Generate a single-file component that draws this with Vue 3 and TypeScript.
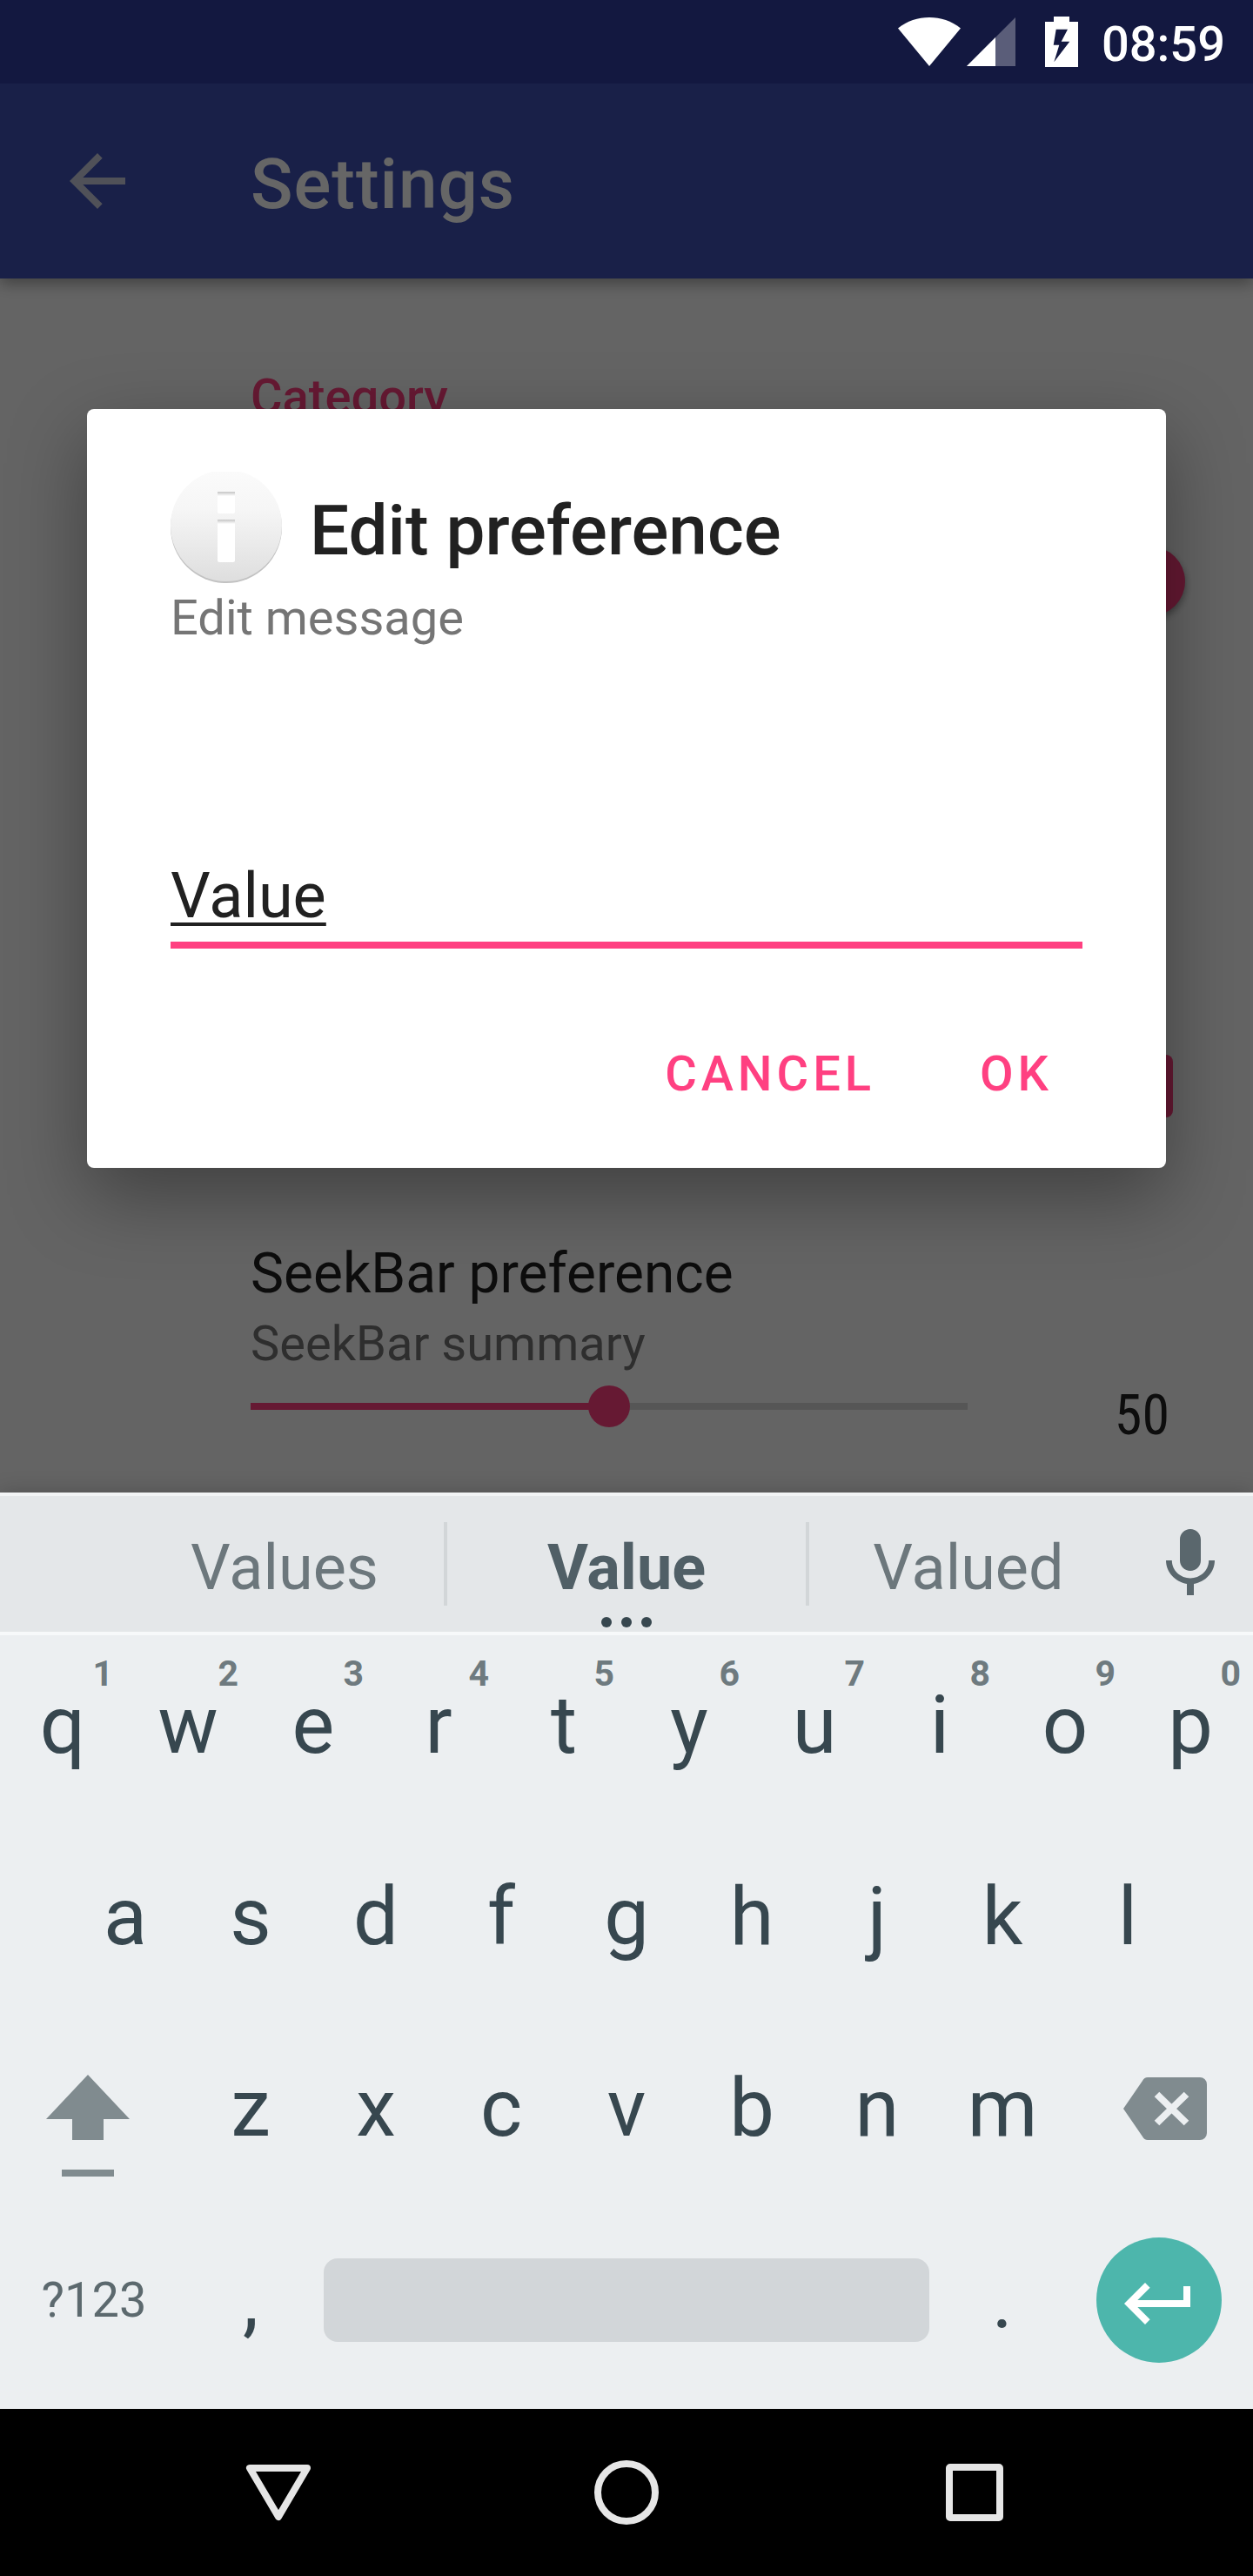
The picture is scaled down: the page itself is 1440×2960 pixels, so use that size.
<script setup lang="ts">
import { ref } from 'vue'

interface Key {
  label: string
  hint?: string
}

const value = ref('Value')
const seek = ref(50)
const switchOn = ref(true)
const checked = ref(true)

const topRow: Key[] = [...'qwertyuiop'].map((label, i) => ({ label, hint: String((i + 1) % 10) }))
const middleRow: Key[] = [...'asdfghjkl'].map((label) => ({ label }))
const bottomRow: Key[] = [...'zxcvbnm'].map((label) => ({ label }))
</script>

<template>
  <div class="screen">
    <header class="status">
      <svg class="wifi" viewBox="0 0 72 56" aria-hidden="true">
        <path d="M0 12.500C10.500 4 23 0 36 0s25.500 4 36 12.500L36 56z" fill="#fff" />
      </svg>
      <svg class="signal" viewBox="0 0 56 56" aria-hidden="true">
        <path d="M0 56 56 0v56z" fill="#fff" fill-opacity=".3" />
        <path d="M0 56 33 23v33z" fill="#fff" />
      </svg>
      <svg class="battery" viewBox="0 0 38 58" aria-hidden="true">
        <path
          d="M10 0h18v6h10v52H0V6h10zM12.700 14.700 9.700 32.700h6.600L10.300 52.300 28.300 28.700h-9.600L26 14.700z"
          fill="#fff"
          fill-rule="evenodd"
        />
      </svg>
      <time class="clock">08:59</time>
    </header>

    <div class="app">
      <div class="toolbar">
        <button class="back" type="button" aria-label="Navigate up">
          <svg viewBox="0 0 24 24"><path d="M20 11H7.830l5.590-5.590L12 4l-8 8 8 8 1.410-1.410L7.830 13H20z" fill="currentColor" /></svg>
        </button>
        <h1>Settings</h1>
      </div>

      <main class="list">
        <h2 class="category">Category</h2>
        <div class="row">
          <input v-model="switchOn" class="switch" type="checkbox" role="switch" aria-label="Switch preference" />
        </div>
        <div class="row-gap"></div>
        <div class="row">
          <input v-model="checked" class="check" type="checkbox" aria-label="Checkbox preference" />
        </div>
        <div class="seek">
          <div class="seek-main">
            <label class="seek-title" for="seek">SeekBar preference</label>
            <p class="seek-summary">SeekBar summary</p>
            <input id="seek" v-model.number="seek" type="range" min="0" max="100" :style="{ '--fill': seek + '%' }" />
          </div>
          <output class="seek-value" for="seek">{{ seek }}</output>
        </div>
      </main>

      <div class="scrim">
        <section class="dialog" role="dialog" aria-labelledby="dialog-title">
          <div class="dialog-head">
            <svg class="info" viewBox="0 0 128 128" aria-hidden="true">
              <defs>
                <linearGradient id="disc" x1="0" y1="0" x2="0" y2="1">
                  <stop offset="0" stop-color="#fbfbfb" />
                  <stop offset=".35" stop-color="#f6f6f6" />
                  <stop offset="1" stop-color="#dedede" />
                </linearGradient>
                <linearGradient id="bar" x1="0" y1="0" x2="0" y2="1">
                  <stop offset="0" stop-color="#c4c4c4" />
                  <stop offset="1" stop-color="#fff" />
                </linearGradient>
              </defs>
              <circle cx="64" cy="64" r="64" fill="#c2c2c2" />
              <circle cx="64" cy="62" r="64" fill="url(#disc)" />
              <rect x="54" y="24" width="20" height="24" rx="2" fill="#fff" />
              <rect x="54" y="56" width="20" height="48" rx="2" fill="#fff" />
              <rect x="54" y="23" width="20" height="5" fill="url(#bar)" />
              <rect x="54" y="55" width="20" height="5" fill="url(#bar)" />
            </svg>
            <h2 id="dialog-title">Edit preference</h2>
          </div>
          <label class="message" for="pref-value">Edit message</label>
          <input id="pref-value" v-model="value" class="field" type="text" spellcheck="false" />
          <div class="actions">
            <button type="button">CANCEL</button>
            <button type="button">OK</button>
          </div>
        </section>
      </div>
    </div>

    <section class="keyboard" aria-label="Keyboard">
      <div class="strip">
        <button class="word" type="button">Values</button>
        <i class="rule"></i>
        <button class="word main-word" type="button">
          Value
          <svg class="dots" viewBox="0 0 58 12" aria-hidden="true">
            <circle cx="6" cy="6" r="6" /><circle cx="29" cy="6" r="6" /><circle cx="52" cy="6" r="6" />
          </svg>
        </button>
        <i class="rule"></i>
        <button class="word" type="button">Valued</button>
        <button class="mic" type="button" aria-label="Voice input">
          <svg viewBox="0 0 24 24">
            <path d="M12 14c1.660 0 3-1.340 3-3V5c0-1.660-1.340-3-3-3S9 3.340 9 5v6c0 1.660 1.340 3 3 3zm5.300-3c0 3-2.540 5.100-5.300 5.100S6.700 14 6.700 11H5c0 3.410 2.720 6.230 6 6.720V21h2v-3.280c3.280-.480 6-3.300 6-6.720z" fill="currentColor" />
          </svg>
        </button>
      </div>

      <div class="keys">
        <div class="krow">
          <button v-for="k in topRow" :key="k.label" class="key" type="button">
            {{ k.label }}<span class="hint">{{ k.hint }}</span>
          </button>
        </div>
        <div class="krow inset">
          <button v-for="k in middleRow" :key="k.label" class="key" type="button">{{ k.label }}</button>
        </div>
        <div class="krow">
          <button class="key wide shift" type="button" aria-label="Shift">
            <svg viewBox="0 0 96 118">
              <path d="M48 0 96 51H66v24H30V51H0z" fill="currentColor" />
              <path d="M18 109h60v8H18z" fill="currentColor" />
            </svg>
          </button>
          <button v-for="k in bottomRow" :key="k.label" class="key" type="button">{{ k.label }}</button>
          <button class="key wide erase" type="button" aria-label="Delete">
            <svg viewBox="0 0 96 72">
              <path d="M28 0h60a8 8 0 0 1 8 8v56a8 8 0 0 1-8 8H28q-4 0-6-4L0 36 22 4q2-4 6-4z" fill="currentColor" />
              <path d="m38.500 19.500 34 33m0-33-34 33" fill="none" stroke="#eceff1" stroke-width="8" />
            </svg>
          </button>
        </div>
        <div class="krow">
          <button class="key wide symbols" type="button">?123</button>
          <button class="key" type="button">,</button>
          <button class="key space" type="button" aria-label="Space"><span></span></button>
          <button class="key" type="button">.</button>
          <button class="key wide" type="button" aria-label="Enter">
            <span class="enter">
              <svg viewBox="0 -1 24 24"><path d="M19 7v4H5.830l3.580-3.590L8 6l-6 6 6 6 1.410-1.410L5.830 13H21V7z" fill="#fff" /></svg>
            </span>
          </button>
        </div>
      </div>
    </section>

    <nav class="navbar">
      <button type="button" aria-label="Back">
        <svg viewBox="0 0 80 80"><path d="M7 12h66L40 68z" /></svg>
      </button>
      <button type="button" aria-label="Home">
        <svg viewBox="0 0 80 80"><circle cx="40" cy="40" r="33" /></svg>
      </button>
      <button type="button" aria-label="Overview">
        <svg viewBox="0 0 80 80"><rect x="11" y="11" width="58" height="58" rx="1" /></svg>
      </button>
    </nav>
  </div>
</template>

<style>
body {
  margin: 0;
  background: #000;
}
</style>

<style scoped>
.screen {
  display: flex;
  flex-direction: column;
  min-height: 100vh;
  font-family: Roboto, 'Liberation Sans', sans-serif;
  font-size: 56px;
  line-height: 64px;
}
.screen *,
.screen *::before {
  box-sizing: border-box;
}
h1,
h2,
p {
  margin: 0;
  font-weight: 500;
}
button {
  margin: 0;
  padding: 0;
  border: 0;
  background: none;
  color: inherit;
  font: inherit;
}
svg {
  display: block;
}

.status {
  display: flex;
  align-items: flex-start;
  justify-content: flex-end;
  height: 96px;
  padding: 19px 32px 0 0;
  background: #131840;
  color: #fff;
}
.wifi {
  width: 72px;
  height: 56px;
  margin: 1px 7px 0 0;
}
.signal {
  width: 56px;
  height: 56px;
  margin: 1px 34px 0 0;
}
.battery {
  width: 38px;
  height: 58px;
  margin-right: 27px;
}
.clock {
  font-weight: 500;
}

.app {
  position: relative;
  display: flex;
  flex: 1;
  flex-direction: column;
  overflow: hidden;
  background: #fafafa;
}
.toolbar {
  position: relative;
  display: flex;
  align-items: center;
  height: 224px;
  background: #3f51b5;
  box-shadow: 0 6px 16px rgba(0, 0, 0, 0.35);
  color: #fff;
}
.back {
  width: 288px;
  padding-left: 64px;
  color: #c8cbdd;
}
.back svg {
  width: 96px;
  height: 96px;
}
.toolbar h1 {
  padding-top: 8px;
  font-size: 80px;
  letter-spacing: 1px;
  line-height: 96px;
}
.list {
  display: flex;
  flex-direction: column;
}
.category {
  height: 200px;
  padding: 104px 0 0 288px;
  color: #ff4081;
  font-size: 56px;
}
.row {
  display: flex;
  align-items: center;
  justify-content: flex-end;
  height: 296px;
  padding-right: 92px;
}
.row-gap {
  height: 284px;
}
.switch {
  display: flex;
  align-items: center;
  justify-content: flex-end;
  width: 136px;
  height: 56px;
  margin: 0 -14px 0 0;
  border-radius: 28px;
  background: #ffb3cd;
  appearance: none;
}
.switch::before {
  width: 80px;
  height: 80px;
  border-radius: 50%;
  background: #ff4081;
  box-shadow: 0 4px 8px rgba(0, 0, 0, 0.4);
  content: '';
}
.check {
  width: 72px;
  height: 72px;
  margin: 0;
  border-radius: 8px;
  background: #ff4081;
  appearance: none;
}
.seek {
  display: flex;
  justify-content: space-between;
  padding: 32px 0 0 288px;
}
.seek-main {
  flex: 1;
  padding-bottom: 72px;
}
.seek-title {
  display: block;
  color: #212121;
  font-size: 64px;
  line-height: 72px;
}
.seek-summary {
  margin: 12px 0 16px;
  color: #737373;
  font-weight: 400;
}
.seek input {
  display: block;
  width: 100%;
  height: 48px;
  margin: 0;
  background: linear-gradient(#ff4081, #ff4081) 0 50% / var(--fill) 8px no-repeat,
    linear-gradient(#d8d8d8, #d8d8d8) 0 50% / 100% 8px no-repeat;
  appearance: none;
}
.seek input::-webkit-slider-thumb {
  width: 48px;
  height: 48px;
  border-radius: 50%;
  background: #ff4081;
  appearance: none;
}
.seek-value {
  align-self: flex-end;
  width: 328px;
  padding: 0 96px 53px 0;
  color: #212121;
  font-family: 'Roboto Condensed', Roboto, sans-serif;
  font-size: 64px;
  text-align: right;
}

.scrim {
  position: absolute;
  inset: 0;
  display: flex;
  align-items: center;
  padding: 0 100px;
  background: rgba(0, 0, 0, 0.6);
}
.dialog {
  display: flex;
  flex: 1;
  flex-direction: column;
  padding: 72px 96px 36px;
  border-radius: 8px;
  background: #fff;
  box-shadow: 0 32px 88px rgba(0, 0, 0, 0.36);
  color: #212121;
}
.dialog-head {
  display: flex;
  align-items: center;
  gap: 32px;
}
.info {
  width: 128px;
  height: 128px;
}
.dialog-head h2 {
  padding-top: 8px;
  font-size: 80px;
  line-height: 96px;
}
.message {
  margin-top: 8px;
  color: #757575;
}
.field {
  width: 100%;
  margin-top: 244px;
  padding: 0 0 8px;
  border: 0;
  border-bottom: 8px solid #ff4081;
  outline: 0;
  background: none;
  color: #212121;
  font: 72px/88px Roboto, sans-serif;
  text-decoration: underline;
  text-decoration-skip-ink: none;
  text-decoration-thickness: 4px;
  text-underline-offset: 6px;
}
.actions {
  display: flex;
  justify-content: flex-end;
  gap: 56px;
  margin-top: 72px;
  padding-right: 2px;
}
.actions button {
  height: 144px;
  padding: 0 32px;
  color: #ff4081;
  font-weight: 500;
  letter-spacing: 5px;
}

.keyboard {
  position: relative;
  background: #eceff1;
  box-shadow: 0 0 24px rgba(0, 0, 0, 0.2);
  color: #37474f;
}
.strip {
  display: flex;
  align-items: center;
  height: 164px;
  padding-left: 144px;
  border-top: 4px solid #f2f4f5;
  border-bottom: 4px solid #f7f9fa;
  background: #e4e7e9;
}
.word {
  flex: 8 1 0;
  height: 100%;
  padding-top: 10px;
  color: #6c777c;
  font-size: 72px;
}
.main-word {
  position: relative;
  flex-grow: 9;
  color: #505f66;
  font-weight: 700;
}
.dots {
  position: absolute;
  bottom: 5px;
  left: 50%;
  width: 58px;
  height: 12px;
  margin-left: -29px;
  fill: #37474f;
}
.rule {
  width: 4px;
  height: 96px;
  background: #d2d6d8;
}
.mic {
  display: grid;
  place-items: center;
  width: 144px;
  color: #5a676d;
}
.mic svg {
  width: 96px;
  height: 96px;
}
.keys {
  padding-bottom: 9px;
}
.krow {
  display: flex;
  height: 220px;
}
.inset {
  padding: 0 5%;
}
.key {
  position: relative;
  display: flex;
  flex: 2 1 0;
  align-items: center;
  justify-content: center;
  padding-bottom: 12px;
  font-size: 92px;
}
.wide {
  flex-grow: 3;
}
.hint {
  position: absolute;
  top: 20px;
  right: 14px;
  color: #6e7a7f;
  font-size: 41px;
  font-weight: 700;
  line-height: 48px;
}
.shift,
.erase {
  color: #808b8f;
}
.shift svg {
  width: 96px;
  height: 118px;
  margin: 40px 14px 0 0;
}
.erase svg {
  width: 96px;
  height: 72px;
  margin-left: 14px;
}
.symbols {
  color: #5c696e;
  font-size: 56px;
}
.space {
  flex-grow: 10;
}
.space span {
  flex: 1;
  height: 96px;
  margin: 0 12px;
  border-radius: 16px;
  background: #d2d6d9;
}
.enter {
  display: grid;
  place-items: center;
  width: 144px;
  height: 144px;
  border-radius: 50%;
  background: #4db6ac;
}
.enter svg {
  width: 96px;
  height: 96px;
}

.navbar {
  display: flex;
  height: 192px;
  padding: 0 calc(100% / 12);
  background: #000;
}
.navbar button {
  display: grid;
  flex: 1;
  place-items: center;
}
.navbar svg {
  width: 80px;
  height: 80px;
  fill: none;
  stroke: #e6e6e6;
  stroke-linejoin: round;
  stroke-width: 8px;
}
</style>
